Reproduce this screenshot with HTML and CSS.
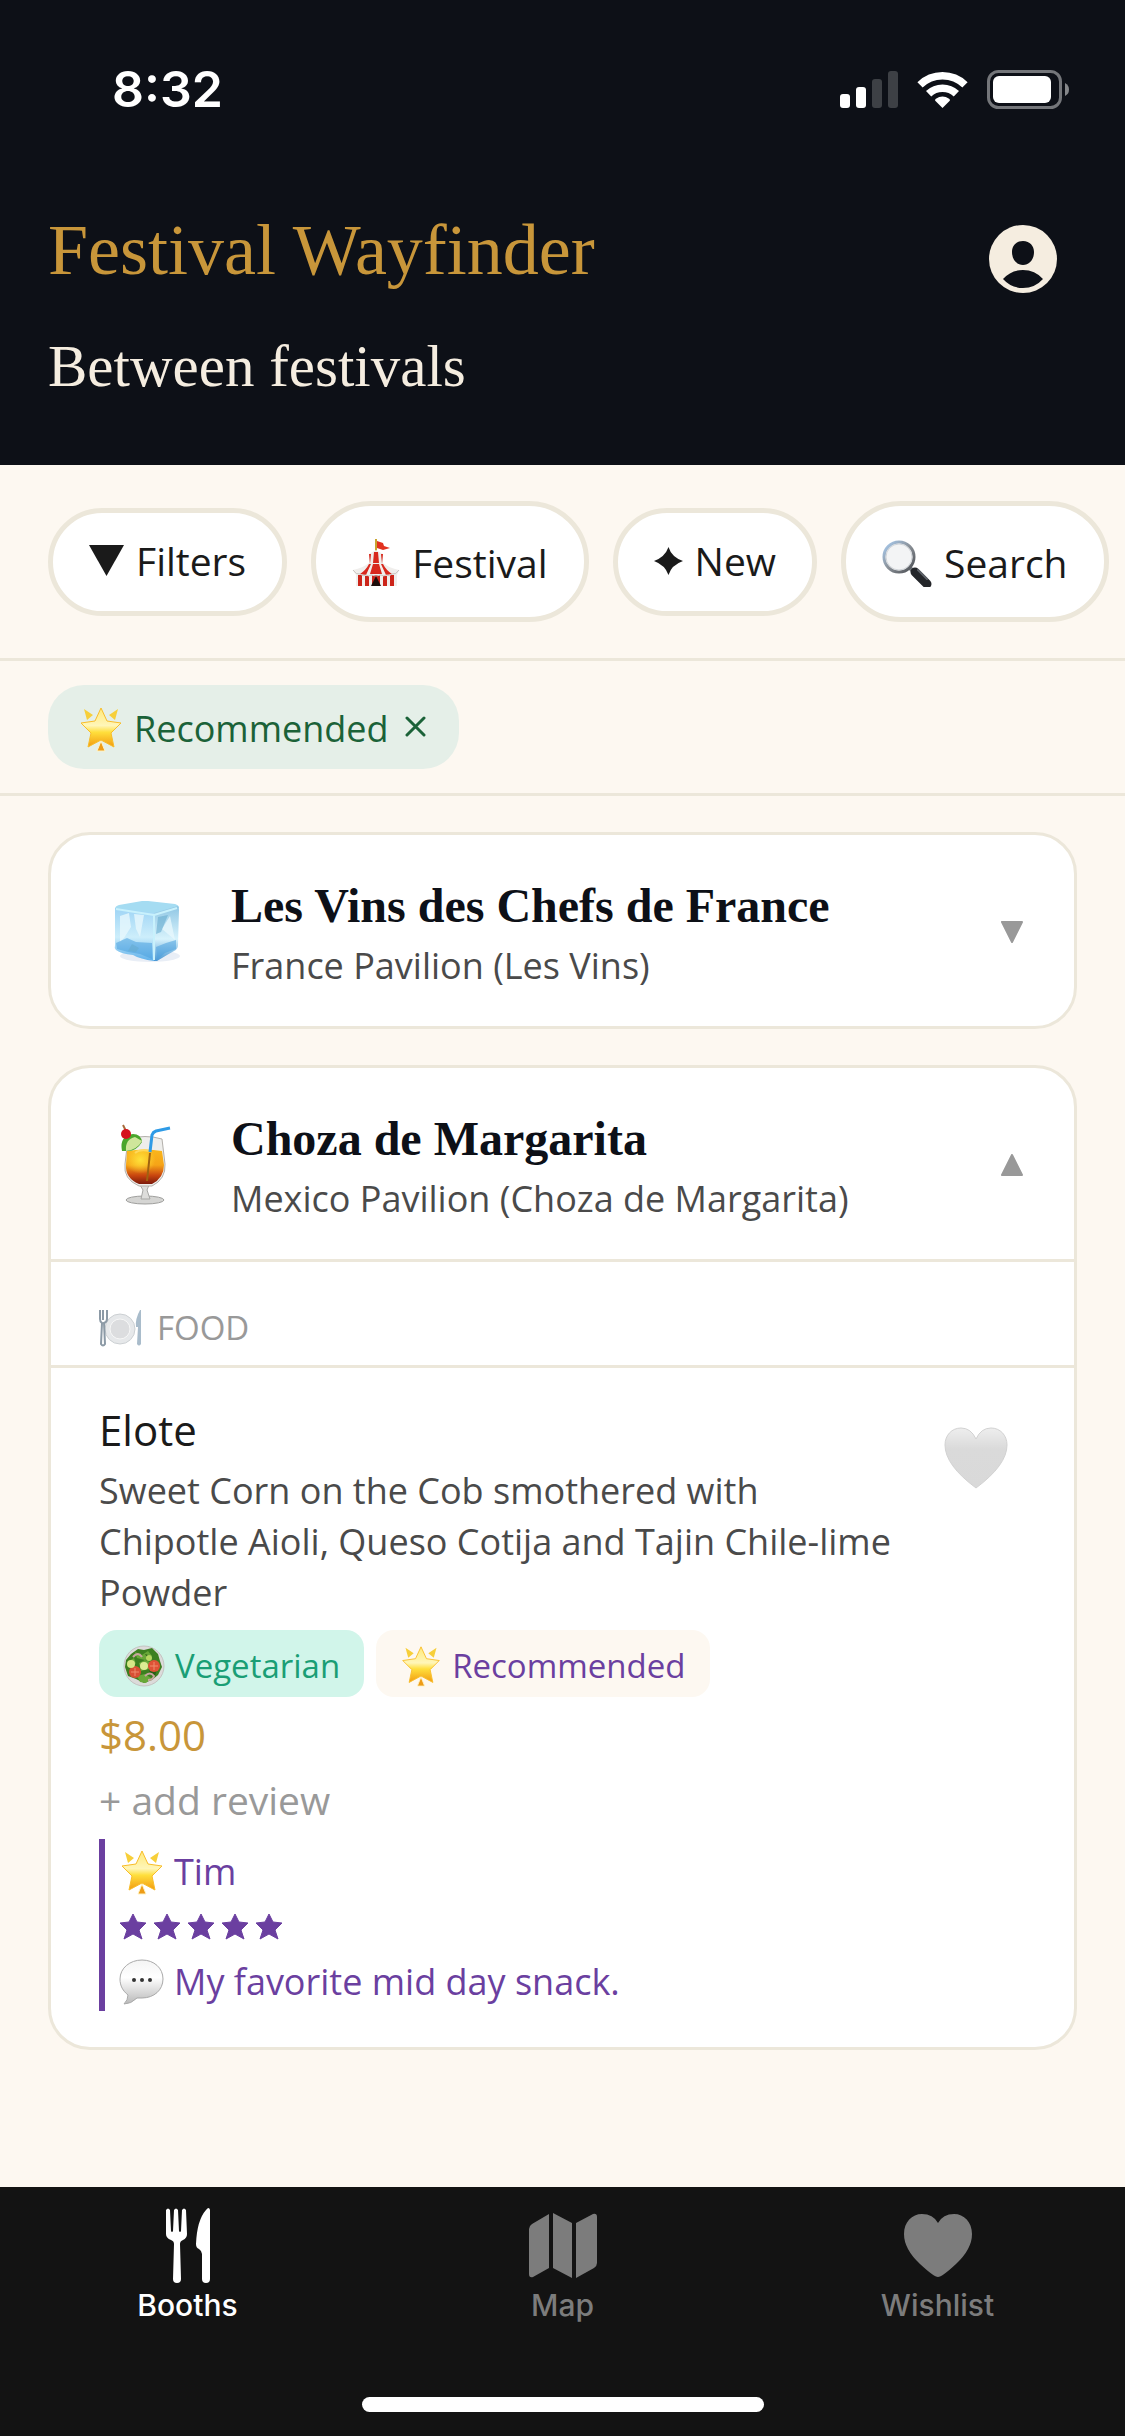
FILE: index.html
```html
<!DOCTYPE html>
<html lang="en">
<head>
  <meta charset="utf-8">
  <meta name="viewport" content="width=device-width, initial-scale=1">
  <title>Festival Wayfinder</title>
  <link rel="stylesheet" href="styles.css">
</head>
<body>
  <!-- Shared icons -->
  <svg class="sprite" aria-hidden="true">
    <defs>
      <linearGradient id="starFill" x1="0" y1="0" x2="0" y2="1">
        <stop offset="0" stop-color="#ffe97a"/>
        <stop offset="0.45" stop-color="#fff6b8"/>
        <stop offset="0.62" stop-color="#ffdf3c"/>
        <stop offset="1" stop-color="#f29a10"/>
      </linearGradient>
      <linearGradient id="bubbleFill" x1="0" y1="0" x2="0" y2="1">
        <stop offset="0" stop-color="#f4f4f4"/>
        <stop offset="0.4" stop-color="#ffffff"/>
        <stop offset="1" stop-color="#b9b9b9"/>
      </linearGradient>
      <linearGradient id="drinkFill" x1="0" y1="0" x2="0" y2="1">
        <stop offset="0" stop-color="#f9b61c"/>
        <stop offset="0.45" stop-color="#f6a417"/>
        <stop offset="0.75" stop-color="#c9460f"/>
        <stop offset="1" stop-color="#7c1a0c"/>
      </linearGradient>
      <radialGradient id="drinkShine" cx="0.38" cy="0.3" r="0.4">
        <stop offset="0" stop-color="#ffe23a"/>
        <stop offset="1" stop-color="#ffe23a" stop-opacity="0"/>
      </radialGradient>
      <linearGradient id="iceLeft" x1="0" y1="0" x2="0" y2="1">
        <stop offset="0" stop-color="#9ed4f5"/>
        <stop offset="0.55" stop-color="#cdeefb"/>
        <stop offset="1" stop-color="#5fb0ea"/>
      </linearGradient>
      <linearGradient id="iceRight" x1="0" y1="0" x2="0" y2="1">
        <stop offset="0" stop-color="#8fc6e4"/>
        <stop offset="0.6" stop-color="#d8f3fc"/>
        <stop offset="1" stop-color="#4a97d3"/>
      </linearGradient>
      <linearGradient id="heartFill" x1="0" y1="0" x2="0" y2="1">
        <stop offset="0" stop-color="#eeeeee"/>
        <stop offset="0.35" stop-color="#dadada"/>
        <stop offset="1" stop-color="#d9d9d9"/>
      </linearGradient>
      <linearGradient id="lensRim" x1="0" y1="0" x2="1" y2="1">
        <stop offset="0" stop-color="#a9cdf2"/>
        <stop offset="0.5" stop-color="#8a9097"/>
        <stop offset="1" stop-color="#4a4d52"/>
      </linearGradient>
    </defs>

    <symbol id="glowStar" viewBox="0 0 46 46">
      <path d="M6 3l9 6-6 5zM40 3l-9 6 6 5z" fill="#f7cf3a"/>
      <path d="M23 2l6 13 14 2-10 10 3 14-13-7-13 7 3-14L3 17l14-2z" fill="url(#starFill)" stroke="#f8bd2a" stroke-width="1" stroke-linejoin="round"/>
      <path d="M23 35l4 10h-8z" fill="#ee9c17" stroke="#fff3c4" stroke-width="1"/>
    </symbol>

    <symbol id="tent" viewBox="0 0 48 48">
      <path d="M24 0v14" stroke="#c9a530" stroke-width="2"/>
      <path d="M25 2l6 2 1 3 6 2-7 2-6-2z" fill="#e2321f"/>
      <path d="M24 11l7 4v9q6 5 16 7l-2 5v11H4V36l-3-5q10-2 16-7v-9z" fill="#f0eeec"/>
      <path d="M22 13h4l1 11h-6zM17 15l2 0-1 10zM31 15h-2l1 10z" fill="#d8281d"/>
      <path d="M21 25h6l3 10H18zM17 25l2 0-5 11-6-1q6-4 9-10zM31 25h-2l5 11 6-1q-6-4-9-10z" fill="#d8281d"/>
      <path d="M6 36h4v11H6zM13 37h4v10h-4zM31 37h4v10h-4zM38 36h4v11h-4zM20 36h8v11h-8z" fill="#cc2419"/>
      <path d="M1 31q3 5 7 4 3 3 6 1 3 2 5 0 5 2 10 0 3 2 5 0 4 2 6-1 4 1 7-4" fill="none" stroke="#c9c4c0" stroke-width="1"/>
      <path d="M24 37l5 10H19z" fill="#1c0e0c"/>
    </symbol>

    <symbol id="lens" viewBox="0 0 50 48">
      <path d="M28 29l6 6" stroke="#75797e" stroke-width="4"/>
      <path d="M33 33l12 12" stroke="#24262a" stroke-width="9" stroke-linecap="round"/>
      <path d="M36 31l9 9" stroke="#5d6168" stroke-width="2" stroke-linecap="round"/>
      <circle cx="17" cy="18" r="15" fill="#f3f4f5" stroke="url(#lensRim)" stroke-width="3"/>
      <circle cx="17" cy="18" r="13" fill="none" stroke="#d0d4d8" stroke-width="1"/>
    </symbol>

    <symbol id="ice" viewBox="0 0 66 64">
      <ellipse cx="36" cy="56" rx="30" ry="6" fill="#e9eef6"/>
      <path d="M1 9q0-3 4-4L28 1h6l27 3q4 1 4 4l-25 7z" fill="#a5dcf2"/>
      <path d="M1 8l39 5v48q-14-2-21-6-12-1-17-5-2-2-1-5z" fill="url(#iceLeft)"/>
      <path d="M40 13l24-7q1 1 1 4l-1 35q0 4-4 6l-7 4-10 6h-3z" fill="url(#iceRight)"/>
      <path d="M6 16l9-3 2 14-7 11-4 4zM20 14l10 1-4 22-4-8zM56 16l5 24-13-11z" fill="#e7f8fd" opacity="0.8"/>
      <path d="M2 43l11-5 9 4 16 1v16l-12-5-12-2-11-3zM42 47l10-4 10-3v9l-11 4-8 7z" fill="#4ba1df" opacity="0.55"/>
      <path d="M18 44l7 4-3 4-8-1zM44 17l10-2-7 17-5 2z" fill="#67abcf" opacity="0.6"/>
      <path d="M2 9l38 6 23-7M40 14v46" fill="none" stroke="#c8f1fc" stroke-width="2" stroke-linejoin="round"/>
    </symbol>

    <symbol id="cocktail" viewBox="0 0 52 82">
      <ellipse cx="24" cy="76" rx="19" ry="4" fill="#d5d5d3" stroke="#9f9f9d" stroke-width="1"/>
      <path d="M19 61h9l-2 5 3 9h-9l2-9z" fill="#dddddb" stroke="#a7a7a5" stroke-width="1"/>
      <path d="M7 15q17-5 34 0l3 25Q45 55 31 62H18Q2 55 4 40z" fill="#eeeeec" stroke="#b3b0ab" stroke-width="1"/>
      <path d="M6 27q18-3 35 0l2 14Q43 54 31 60H18Q4 54 5 41z" fill="url(#drinkFill)"/>
      <path d="M6 27q18-3 35 0l2 14Q43 54 31 60H18Q4 54 5 41z" fill="url(#drinkShine)"/>
      <path d="M14 29q5-4 14-2" fill="none" stroke="#ffd85a" stroke-width="2"/>
      <path d="M29 29l-3 28" stroke="#9f6210" stroke-width="2"/>
      <path d="M1 27q-3-15 11-17 8 0 9 8-6 10-16 9z" fill="#4aa62c"/>
      <path d="M5 27q-1-12 9-14l7 4q-5 9-16 10z" fill="#cfe69b"/>
      <path d="M2 1l4 8" stroke="#a86b3b" stroke-width="2"/>
      <circle cx="5" cy="10" r="5" fill="#d5101c"/>
      <path d="M29 28l2-17q1-3 4-4l14-3" fill="none" stroke="#2f9be6" stroke-width="3" stroke-linejoin="round"/>
    </symbol>

    <symbol id="plate" viewBox="0 0 44 38">
      <circle cx="21" cy="20" r="15" fill="#e6e8ea" stroke="#ccd0d3" stroke-width="1"/>
      <circle cx="21" cy="20" r="10" fill="#dcdddf" stroke="#f7f7f7" stroke-width="1"/>
      <path d="M1 1v9q0 3 2 4l-1 21q2 3 4 0L5 14q3-1 3-4V1M4 1v10" fill="none" stroke="#8c9aa6" stroke-width="2"/>
      <path d="M41 1q-5 9-4 17h2l-1 17q2 3 4 0V1z" fill="#a9bccb"/>
    </symbol>

    <symbol id="salad" viewBox="0 0 42 42">
      <circle cx="21" cy="21" r="20" fill="#dcdbda" stroke="#c4c4c2" stroke-width="1"/>
      <path d="M8 9l7-5 6 1 8-2 6 6 2 7 2 6-4 8-6 5-8 3-8-4-8-3-3-9 1-7z" fill="#3c7f20"/>
      <path d="M12 7l7 3 6-4 4 5-7 4-8-2zM16 18l6-3 7 3-3 6-8 2zM14 31l8-2 6 4-5 5-6-1zM6 16l5-3 2 6z" fill="#69a838"/>
      <path d="M27 22l7 2-2 7-6-2zM22 9l6 2-2 4z" fill="#2a5d15"/>
      <path d="M10 12q5-6 9 0M22 31q5-5 9 0-1 4-6 4" fill="none" stroke="#c9a5a0" stroke-width="2"/>
      <circle cx="12" cy="27" r="6" fill="#d84f33"/>
      <circle cx="31" cy="21" r="6" fill="#de5236"/>
      <path d="M12 23v8M8 27h8M31 17v8M27 21h8" stroke="#f08c6c" stroke-width="1"/>
      <circle cx="8" cy="19" r="4" fill="#d6e887"/>
      <circle cx="21" cy="21" r="4" fill="#dcec93"/>
      <circle cx="26" cy="13" r="3" fill="#b6d560"/>
    </symbol>

    <symbol id="bubble" viewBox="0 0 46 46">
      <path d="M23 1c12 0 21 8 21 19s-9 19-21 19h-5q-6 6-13 6 4-4 4-9C4 32 1 27 1 20 1 9 11 1 23 1z" fill="url(#bubbleFill)" stroke="#a9a9a9" stroke-width="1"/>
      <circle cx="15" cy="21" r="2" fill="#333"/>
      <circle cx="23" cy="21" r="2" fill="#333"/>
      <circle cx="31" cy="21" r="2" fill="#333"/>
    </symbol>

    <symbol id="star" viewBox="0 0 28 27">
      <path d="M14 1l4 8 9 1-7 7 3 9-9-5-9 5 3-9-7-7 9-1z" fill="currentColor" stroke="currentColor" stroke-width="1" stroke-linejoin="round"/>
    </symbol>
  </svg>

  <header class="header">
    <div class="status-bar">
      <span class="time">8:32</span>
      <div class="status-icons">
        <svg width="58" height="37" viewBox="0 0 58 37" role="img" aria-label="Signal">
          <rect x="0" y="23" width="10" height="14" rx="3" fill="#fff"/>
          <rect x="16" y="16" width="10" height="21" rx="3" fill="#fff"/>
          <rect x="32" y="8" width="10" height="29" rx="3" fill="#3d4045"/>
          <rect x="48" y="0" width="10" height="37" rx="3" fill="#3d4045"/>
        </svg>
        <svg width="51" height="37" viewBox="0 0 152 112" role="img" aria-label="Wi-Fi">
          <path d="M8 42a98 98 0 0 1 136 0M34 69a61 61 0 0 1 84 0" fill="none" stroke="#fff" stroke-width="23"/>
          <path d="M76 112L54 90q-2-3 2-6 20-14 40 0 4 3 2 6z" fill="#fff"/>
        </svg>
        <svg width="82" height="39" viewBox="0 0 82 39" role="img" aria-label="Battery">
          <rect x="1.500" y="1.500" width="72" height="36" rx="10" fill="none" stroke="#74767a" stroke-width="3"/>
          <rect x="6" y="6" width="58" height="27" rx="6" fill="#fff"/>
          <path d="M78 13q4 2 4 6.500T78 26z" fill="#85878a"/>
        </svg>
      </div>
    </div>
    <div class="brand">
      <h1>Festival Wayfinder</h1>
      <button class="profile-button" aria-label="Profile">
        <svg width="68" height="68" viewBox="0 0 68 68">
          <circle cx="34" cy="34" r="34" fill="#f5ede0"/>
          <path d="M34 16c7 0 11 5 11 11 0 8-5 13-11 13s-11-5-11-13c0-6 4-11 11-11zM14 54q8-9 20-9t20 9q-8 9-20 9t-20-9z" fill="#0d1017"/>
        </svg>
      </button>
    </div>
    <p class="subtitle">Between festivals</p>
  </header>

  <main class="content">
    <div class="filter-bar">
      <button class="chip">
        <svg width="35" height="31" viewBox="0 0 35 31" aria-hidden="true"><path d="M0 0h35L17.500 31z" fill="currentColor"/></svg>
        Filters
      </button>
      <button class="chip chip-emoji">
        <svg width="48" height="48" aria-hidden="true"><use href="#tent"/></svg>
        Festival
      </button>
      <button class="chip">
        <svg width="29" height="28" viewBox="0 0 29 28" aria-hidden="true"><path d="M14.500 0q3 10 14.500 14-11.500 4-14.500 14Q11 18 0 14 11 10 14.500 0z" fill="currentColor"/></svg>
        New
      </button>
      <button class="chip chip-emoji">
        <svg width="50" height="48" aria-hidden="true"><use href="#lens"/></svg>
        Search
      </button>
    </div>

    <div class="active-filters">
      <button class="active-chip" aria-label="Remove filter Recommended">
        <svg width="46" height="46" aria-hidden="true"><use href="#glowStar"/></svg>
        Recommended
        <svg class="remove" width="21" height="21" viewBox="0 0 21 21" aria-hidden="true"><path d="M2 2l17 17M19 2L2 19" stroke="currentColor" stroke-width="3" stroke-linecap="round"/></svg>
      </button>
    </div>

    <div class="booths">
      <section class="card">
        <button class="card-header" aria-expanded="false">
          <span class="card-icon"><svg width="66" height="64" aria-hidden="true"><use href="#ice"/></svg></span>
          <span class="card-text">
            <span class="card-title">Les Vins des Chefs de France</span>
            <span class="card-place">France Pavilion (Les Vins)</span>
          </span>
          <svg class="arrow" width="24" height="24" viewBox="0 0 24 24" aria-hidden="true"><path d="M2 2h20L12 22z"/></svg>
        </button>
      </section>

      <section class="card">
        <button class="card-header" aria-expanded="true">
          <span class="card-icon"><svg width="52" height="82" aria-hidden="true"><use href="#cocktail"/></svg></span>
          <span class="card-text">
            <span class="card-title">Choza de Margarita</span>
            <span class="card-place">Mexico Pavilion (Choza de Margarita)</span>
          </span>
          <svg class="arrow" width="24" height="24" viewBox="0 0 24 24" aria-hidden="true"><path d="M2 22h20L12 2z"/></svg>
        </button>

        <h2 class="section-label">
          <svg width="44" height="38" aria-hidden="true"><use href="#plate"/></svg>
          FOOD
        </h2>

        <article class="item">
          <div class="item-main">
            <h3>Elote</h3>
            <p class="description">Sweet Corn on the Cob smothered with Chipotle Aioli, Queso Cotija and Tajin Chile-lime Powder</p>
            <div class="tags">
              <span class="tag tag-veg"><svg width="42" height="42" aria-hidden="true"><use href="#salad"/></svg>Vegetarian</span>
              <span class="tag tag-rec"><svg width="42" height="42" aria-hidden="true"><use href="#glowStar"/></svg>Recommended</span>
            </div>
            <p class="price">$8.00</p>
            <button class="add-review">+ add review</button>
            <div class="review">
              <p><svg width="46" height="46" aria-hidden="true"><use href="#glowStar"/></svg>Tim</p>
              <div class="stars" role="img" aria-label="5 stars">
                <svg width="28" height="27"><use href="#star"/></svg>
                <svg width="28" height="27"><use href="#star"/></svg>
                <svg width="28" height="27"><use href="#star"/></svg>
                <svg width="28" height="27"><use href="#star"/></svg>
                <svg width="28" height="27"><use href="#star"/></svg>
              </div>
              <p><svg width="46" height="46" aria-hidden="true"><use href="#bubble"/></svg>My favorite mid day snack.</p>
            </div>
          </div>
          <button class="wish-button" aria-label="Add to wishlist">
            <svg width="64" height="62" viewBox="0 0 64 62"><path d="M32 61Q1 38 1 18C1 8 8 1 17 1q10 0 15 11Q37 1 47 1c9 0 16 7 16 17q0 20-31 43z" fill="url(#heartFill)" stroke="#d2d2d2" stroke-width="1"/></svg>
          </button>
        </article>
      </section>
    </div>
  </main>

  <nav class="tab-bar">
    <div class="tabs">
      <a class="tab active" href="#booths">
        <svg width="46" height="76" viewBox="0 0 46 76" fill="currentColor" aria-hidden="true">
          <path d="M1 2q2-3 4 0l1 21q1 2 2 0L9 2q2-3 4 0l1 21q1 2 2 0l1-21q2-3 4 0l1 24q0 4-4 6-3 1-3 4l1 35q0 4-4 4t-4-4l1-35q0-3-3-4-5-2-5-6z"/>
          <path d="M45 2v69q0 4-4 4t-4-4V46q0-3-3-5-3-1-3-5Q32 12 41 2q3-4 4 0z"/>
        </svg>
        Booths
      </a>
      <a class="tab" href="#map">
        <svg width="68" height="66" viewBox="0 0 68 66" fill="currentColor" aria-hidden="true">
          <path d="M20 1v54L4 64q-4 1-4-3V16q0-3 3-5zM24 0l19 10v55L24 55zM47 10l17-9q4-1 4 3v46q0 3-3 5l-18 10z"/>
        </svg>
        Map
      </a>
      <a class="tab" href="#wishlist">
        <svg width="68" height="64" viewBox="0 0 68 64" fill="currentColor" aria-hidden="true">
          <path d="M34 63Q30 63 16 50 0 35 0 20C0 8 8 0 18 0q11 0 16 9Q39 0 50 0c10 0 18 8 18 20q0 15-16 30Q38 63 34 63z"/>
        </svg>
        Wishlist
      </a>
    </div>
    <div class="home-indicator"></div>
  </nav>
</body>
</html>
```
FILE: styles.css
```css
* {
  box-sizing: border-box;
}

body {
  margin: 0;
  min-height: 100vh;
  display: flex;
  flex-direction: column;
  font-family: "Open Sans", sans-serif;
  font-size: 36px;
  line-height: 51px;
  background: #fdf8f1;
  color: #1a1a1a;
}

h1, h2, h3, p {
  margin: 0;
  font-weight: 400;
}

button {
  font: inherit;
  color: inherit;
  background: none;
  border: none;
  padding: 0;
  cursor: pointer;
}

svg {
  flex-shrink: 0;
}

.sprite {
  position: absolute;
  width: 0;
  height: 0;
}

/* Header */
.header {
  background: #0d1017;
  padding: 0 48px 64px;
}

.status-bar {
  display: flex;
  justify-content: space-between;
  align-items: center;
  height: 207px;
  padding: 0 8px 29px 64px;
  color: #ffffff;
}

.time {
  font-family: Inter, sans-serif;
  font-size: 50px;
  font-weight: 600;
}

.status-icons {
  display: flex;
  align-items: center;
  gap: 19px;
}

.brand {
  display: flex;
  justify-content: space-between;
}

h1 {
  font-family: "Liberation Serif", serif;
  font-size: 72px;
  line-height: 86px;
  color: #c8963a;
}

.profile-button {
  display: flex;
  align-items: center;
  justify-content: center;
  width: 108px;
  height: 104px;
}

.subtitle {
  margin-top: 20px;
  font-family: "Liberation Serif", serif;
  font-size: 59px;
  line-height: 70px;
  color: #f5ede0;
}

/* Filters */
.content {
  flex: 1;
}

.filter-bar {
  display: flex;
  align-items: center;
  gap: 24px;
  padding: 36px 48px;
  border-bottom: 3px solid #ece7da;
  overflow-x: auto;
  scrollbar-width: none;
}

.chip {
  display: flex;
  flex-shrink: 0;
  align-items: center;
  gap: 12px;
  padding: 24px 36px 26px;
  border: 5px solid #ece7da;
  border-radius: 60px;
  background: #ffffff;
  font-size: 39px;
  line-height: 48px;
}

.chip-emoji {
  padding: 33px 36px 30px;
}

.active-filters {
  display: flex;
  padding: 24px 48px;
  border-bottom: 3px solid #ece7da;
}

.active-chip {
  display: flex;
  align-items: center;
  gap: 10px;
  padding: 20px 33px 16px 30px;
  border-radius: 36px;
  background: #e5efe8;
  color: #1b6238;
  line-height: 48px;
}

.remove {
  margin: 0 0 6px 6px;
}

/* Booth cards */
.booths {
  display: flex;
  flex-direction: column;
  gap: 36px;
  padding: 36px 48px;
}

.card {
  border: 3px solid #ece7da;
  border-radius: 42px;
  background: #ffffff;
  overflow: hidden;
}

.card-header {
  display: flex;
  align-items: center;
  gap: 36px;
  width: 100%;
  padding: 37px 50px 35px 48px;
  text-align: left;
}

.card-icon {
  display: flex;
  justify-content: center;
  width: 96px;
}

.card-text {
  display: flex;
  flex: 1;
  flex-direction: column;
}

.card-title {
  font-family: "Liberation Serif", serif;
  font-size: 48px;
  font-weight: 700;
  line-height: 68px;
  color: #0d1017;
}

.card-place {
  color: #4a4a4a;
}

.arrow {
  fill: #999999;
  stroke: #999999;
  stroke-width: 2px;
  stroke-linejoin: round;
}

.section-label {
  display: flex;
  align-items: center;
  gap: 14px;
  padding: 43px 48px 15px;
  border-top: 3px solid #ece7da;
  border-bottom: 3px solid #ece7da;
  font-size: 33px;
  line-height: 45px;
  color: #999999;
}

.item {
  display: flex;
  align-items: flex-start;
  gap: 24px;
  padding: 36px 48px;
}

.item-main {
  flex: 1;
}

.item h3 {
  font-size: 42px;
  line-height: 52px;
}

.description {
  margin: 9px 0 12px;
  color: #4a4a4a;
}

.tags {
  display: flex;
  gap: 12px;
}

.tag {
  display: flex;
  align-items: center;
  gap: 10px;
  padding: 13px 24px 9px;
  border-radius: 18px;
  font-size: 33px;
  line-height: 45px;
}

.tag-veg {
  background: #d1f5ea;
  color: #1a9e75;
}

.tag-rec {
  background: #fdf8f1;
  color: #6b3fa0;
}

.price {
  margin-top: 12px;
  font-size: 42px;
  line-height: 52px;
  color: #c8963a;
}

.add-review {
  display: block;
  margin: 15px 0;
  font-size: 39px;
  line-height: 48px;
  color: #999999;
}

.review {
  display: flex;
  flex-direction: column;
  gap: 4px;
  padding: 7px 0 4px 14px;
  border-left: 6px solid #6b3fa0;
  color: #6b3fa0;
}

.review p {
  display: flex;
  align-items: center;
  gap: 9px;
}

.stars {
  display: flex;
  align-items: center;
  gap: 6px;
  height: 51px;
}

.wish-button {
  display: flex;
  align-items: center;
  justify-content: center;
  width: 100px;
  height: 108px;
}

/* Bottom navigation */
.tab-bar {
  padding: 21px 0 24px;
  background: #131313;
}

.tabs {
  display: grid;
  grid-template-columns: repeat(3, 1fr);
  margin-bottom: 74px;
}

.tab {
  display: grid;
  grid-template-rows: 76px 36px;
  gap: 3px;
  align-items: center;
  justify-items: center;
  font-family: Inter, sans-serif;
  font-size: 30px;
  font-weight: 500;
  line-height: 36px;
  color: #7c7c7c;
  text-decoration: none;
}

.tab.active {
  color: #ffffff;
}

.home-indicator {
  width: 402px;
  height: 15px;
  margin: 0 auto;
  border-radius: 8px;
  background: #ffffff;
}
```
